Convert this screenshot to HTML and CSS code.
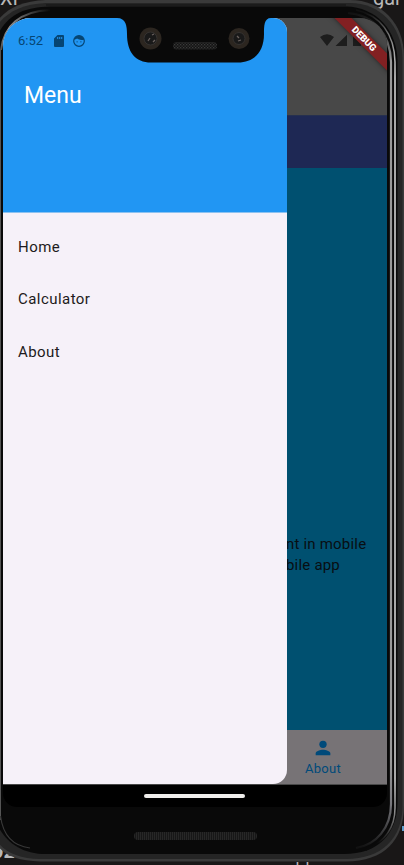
FILE: index.html
```html
<!DOCTYPE html>
<html lang="en">
<head>
<meta charset="utf-8">
<title>Menu</title>
<link rel="stylesheet" href="styles.css">
</head>
<body>
<div class="desktop">
  <span class="behind behind-left">Xİ</span>
  <span class="behind behind-right">gar</span>
  <span class="behind behind-bottom-left">02</span>
  <span class="behind behind-bottom">||</span>
  <span class="behind-edge"></span>
  <svg class="frame" viewBox="0 0 404 865" aria-hidden="true">
    <defs>
      <linearGradient id="rail" x1="0" y1="0" x2="0" y2="865" gradientUnits="userSpaceOnUse">
        <stop offset=".015" stop-color="#111"/><stop offset=".035" stop-color="#333"/><stop offset=".07" stop-color="#999"/>
        <stop offset=".88" stop-color="#999"/><stop offset=".93" stop-color="#77777c"/><stop offset=".98" stop-color="#111"/>
      </linearGradient>
      <linearGradient id="shine" x1="0" y1="0" x2="0" y2="865" gradientUnits="userSpaceOnUse">
        <stop offset=".015" stop-color="#111"/><stop offset=".04" stop-color="#777"/><stop offset=".09" stop-color="#ddd"/>
        <stop offset=".9" stop-color="#ddd"/><stop offset=".94" stop-color="#888"/><stop offset=".975" stop-color="#0a0a0a"/>
      </linearGradient>
      <linearGradient id="leftTop" x1="2" y1="50" x2="50" y2="10" gradientUnits="userSpaceOnUse">
        <stop offset="0" stop-color="#555"/><stop offset=".3" stop-color="#999"/><stop offset="1" stop-color="#0a0a0a"/>
      </linearGradient>
      <pattern id="mesh" width="3" height="3" patternUnits="userSpaceOnUse">
        <rect width="3" height="3" fill="#141414"/><rect width="1.3" height="1.3" fill="#3a3a3a"/><rect x="1.5" y="1.5" width="1.3" height="1.3" fill="#333"/>
      </pattern>
      <pattern id="slots" width="2" height="10" patternUnits="userSpaceOnUse">
        <rect width="2" height="10" fill="#171717"/><rect width="1" height="10" fill="#272727"/>
      </pattern>
    </defs>
    <path d="M-2 20C8 8 22 1 46 0H350C382 0 404 24 404 56V806C404 840 384 861.500 346 861.500H40C18 861 4 855-2 846Z" fill="#3a3a3a"/>
    <path d="M-2 24C8 12 22 4 46 3H350C380 3 402 26 402.500 58V806C402.500 838 382 859 346 859H40C20 859 4 852-2 842Z" fill="#252525"/>
    <path d="M-2 34C8 15 24 7 50 6.500H346C376 7 397.500 30 397.500 62V802C397.500 834 378 854 344 854H46C22 854 6 842-2 826Z" fill="#090909"/>
    <path d="M46 5H346" stroke="#181818" stroke-width="1.500"/>
    <path d="M348 13C374 15 390.500 34 391 62V804C391 828 376 845 356 848" fill="none" stroke="url(#rail)" stroke-width="2.200"/>
    <path d="M356 10C380 15 394.500 34 395 62V808C395 828 384 842 366 850" fill="none" stroke="url(#shine)" stroke-width="1.500"/>
    <path d="M1 50C4 26 20 11 50 10" fill="none" stroke="url(#leftTop)" stroke-width="2"/>
    <path d="M.5 50V820" stroke="#555" stroke-width="1"/>
    <path d="M.5 816C3 836 14 846 30 848" fill="none" stroke="#383838" stroke-width="1.200"/>
    <rect x="134" y="832" width="123" height="8" rx="4" fill="url(#slots)"/>
  </svg>

  <main class="screen">
    <div class="app">
      <div class="page">
        <div class="statusbar-bg"></div>
        <div class="appbar"></div>
        <div class="content"><p>nt in mobile<br>bile app</p></div>
        <nav class="bottom-nav">
          <div class="nav-item">
            <svg width="22" height="22" viewBox="0 0 24 24"><circle cx="12" cy="8" r="4" fill="currentColor"/><path d="M12 14c-2.670 0-8 1.340-8 4v2h16v-2c0-2.660-5.330-4-8-4z" fill="currentColor"/></svg>
            <span>About</span>
          </div>
        </nav>
      </div>
      <aside class="drawer">
        <header class="drawer-header">
          <div class="status">
            <span class="time">6:52</span>
            <svg class="sd" width="10" height="12" viewBox="0 0 10 12"><path fill="currentColor" fill-rule="evenodd" d="M3.500 0H9q1 0 1 1v10q0 1-1 1H1q-1 0-1-1V3.500zM3.200 2v2h1V2zm2 0v2h1V2zm2 0v2h1V2z"/></svg>
            <svg width="12" height="12" viewBox="0 0 12 12"><circle cx="6" cy="6" r="5.300" fill="none" stroke="currentColor" stroke-width="1.200"/><path d="M1 5.300C2 4 3 4.200 4 3.500 6 5 8 4.800 11 5 10.500 2 8.600.8 6 .8S1.500 2 1 5.300z" fill="currentColor"/><circle cx="4.100" cy="6.800" r=".65" fill="currentColor"/><circle cx="7.900" cy="6.800" r=".65" fill="currentColor"/></svg>
          </div>
          <h1>Menu</h1>
        </header>
        <ul class="menu">
          <li>Home</li>
          <li>Calculator</li>
          <li>About</li>
        </ul>
      </aside>
      <svg class="signals" width="50" height="14" viewBox="0 0 50 14"><path fill="#1d1d1d" d="M0 3Q7-2.500 14 3L7 12zM15.500 12 27 .8V12zM33 2h2V.7h4V2h2v10h-8z"/></svg>
      <div class="debug">DEBUG</div>
    </div>
    <div class="gesture"><span></span></div>
  </main>

  <svg class="notch" width="154" height="46" viewBox="0 0 154 46" aria-hidden="true">
    <path d="M0 0H154V1C147 1 147 9 147 17C147 35 137 45.500 121 45.500H34C18 45.500 10 35 10 17C10 9 9 1 0 1Z" fill="#090909"/>
    <g fill="#2c2620"><circle cx="33.500" cy="21.500" r="11"/><circle cx="122" cy="21.500" r="10.500"/></g>
    <g fill="#191919" stroke="#353230"><circle cx="33.500" cy="21.500" r="6.500"/><circle cx="122" cy="21.500" r="6"/></g>
    <path d="m31 24 2-3m2-3 2-1m-1 8 2-2m82-4 2 2m-1 3 3-1" stroke="#6b625f" stroke-width="1.300" fill="none"/>
    <rect x="56" y="25" width="44" height="7.500" rx="3.500" fill="url(#mesh)"/>
  </svg>
</div>
</body>
</html>
```
FILE: styles.css
```css
* { box-sizing: border-box; }
body { margin: 0; background: #191717; font-family: Roboto, sans-serif; }
.desktop { position: relative; width: 404px; height: 865px; overflow: hidden; padding: 18px 17px 58px 3px; }
.frame { position: absolute; left: 0; top: 0; width: 404px; height: 865px; }
.behind { position: absolute; color: #b8b8b8; font-size: 20px; line-height: 20px; white-space: nowrap; }
.behind-left { left: 0; top: -12px; }
.behind-right { left: 373px; top: -12px; }
.behind-bottom-left { left: -8px; top: 841px; font-weight: 700; }
.behind-bottom { left: 295px; top: 860px; letter-spacing: 5px; }
.behind-edge { position: absolute; right: 0; top: 826px; width: 2px; height: 5px; background: #5e9ccb; }
.screen { position: relative; width: 384px; height: 789px; background: #000; border-radius: 28px 28px 14px 14px; overflow: hidden; }
.app { position: relative; height: 767px; background: #484848; }
.page { display: flex; flex-direction: column; height: 766px; }
.statusbar-bg { height: 97px; background: #484848; }
.appbar { height: 53px; background: #1e2854; border-top: 1px solid #26304f; }
.content { flex: 1; background: #005070; padding: 366px 0 0 283px; color: #080e12; }
.content p { margin: 0; font-size: 15px; line-height: 21px; letter-spacing: .2px; white-space: nowrap; }
.bottom-nav { height: 54px; background: #777376; display: flex; justify-content: flex-end; }
.nav-item { width: 128px; display: flex; flex-direction: column; align-items: center; padding-top: 7px; color: #004a7a; font-size: 13px; line-height: 16px; letter-spacing: .3px; }
.nav-item span { margin-top: 2px; }
.drawer { position: absolute; left: 0; top: 0; width: 284px; height: 766px; background: #f6f1f9; border-radius: 0 14px 14px 0; overflow: hidden; }
.drawer-header { height: 195px; background: #2196f3; border-bottom: 1px solid #8cc2f1; padding: 16px 21px 0 15px; }
.status { display: flex; align-items: center; height: 14px; color: #064573; }
.time { font-size: 13px; line-height: 14px; }
.sd { margin: 0 9px 0 11px; }
.drawer-header h1 { margin: 34px 0 0 6px; color: #fff; font-weight: 400; font-size: 23px; line-height: 28px; letter-spacing: 0; }
.menu { list-style: none; margin: 0; padding: 8px 15px; color: #1d1b20; font-size: 15px; letter-spacing: .45px; }
.menu li { height: 52.3px; line-height: 52px; }
.signals { position: absolute; left: 317px; top: 16px; }
.debug { position: absolute; left: 310px; top: 15px; width: 102px; height: 12px; background: #822022; color: #fff; font-size: 9.5px; font-weight: 900; line-height: 12px; text-align: center; transform: rotate(45deg); box-shadow: 0 0 5px rgba(0,0,0,.5); }
.gesture { height: 22px; display: flex; justify-content: center; padding: 9px 1px 0 0; }
.gesture span { width: 101px; height: 3.5px; border-radius: 2px; background: #f0eeec; }
.notch { position: absolute; left: 117px; top: 17px; }
```
